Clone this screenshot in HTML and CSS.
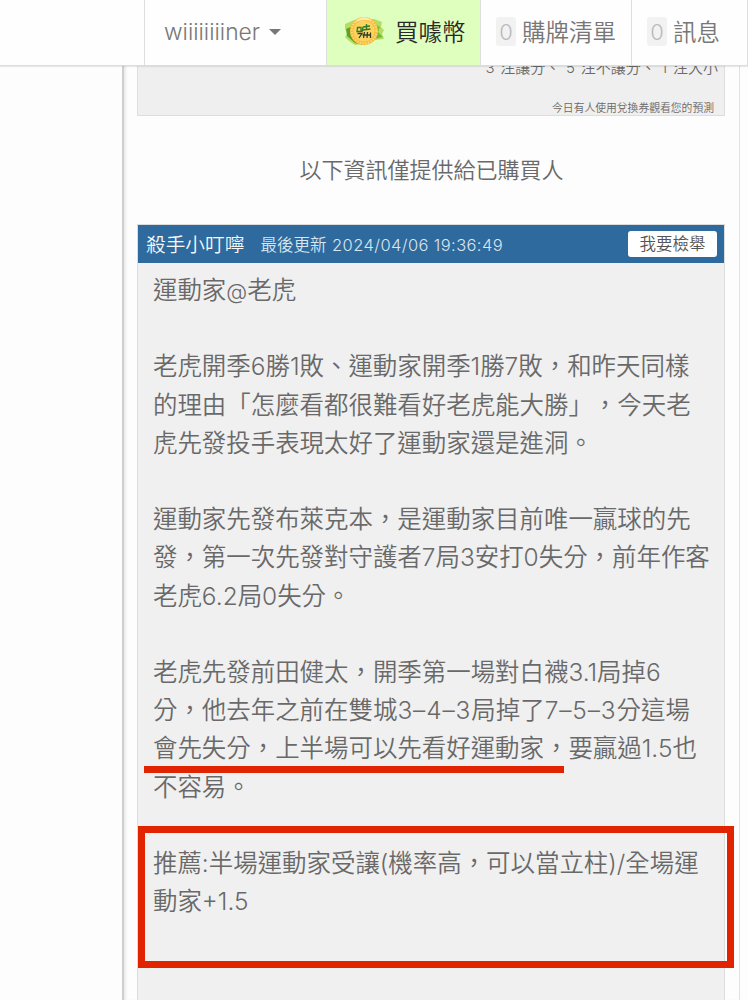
FILE: index.html
```html
<!DOCTYPE html>
<html lang="zh-Hant">
<head>
	<meta charset="UTF-8">
	<title>殺手小叮嚀</title>
	<link rel="stylesheet" href="styles.css">
</head>
<body>
	<div class="topbar">
	    <a class="user">
	        <span class="user_name">wiiiiiiiiner</span>
	        <span class="caret"></span>
	    </a>
	    <a class="coin">
	        <svg class="coin_icon" width="44" height="36" viewBox="0 0 44 36">
	            <path d="M3 11l9-4 20-1 8 3-1 5 3 3-2 4 2 5-9 1-4 3-16 2-6-4-4-4 3-4-3-4z" fill="#b4dd62"/>
	            <path d="M4 16l7-3 2 12 9 7-9-2-8-7z" fill="#5f9f2c"/>
	            <path d="M33 11l5 3-2 5 5 5-9 2z" fill="#78b936"/>
	            <circle cx="22" cy="18" r="14" fill="#f7bd3b"/>
	            <circle cx="22" cy="18" r="12.400" fill="none" stroke="#fde08a" stroke-width="2" stroke-dasharray="1.200 1.600"/>
	            <circle cx="22" cy="18" r="10.600" fill="#fbd35f"/>
	            <path d="M13 9c5-6 12-6 17-1-6-2-12-1-17 1z" fill="#ffe9a5"/>
	            <g fill="none" stroke="#2f7a2c" stroke-width="1.300">
	                <path d="M15.500 14.500h3.500v4h-4zM21 14l7-1M24.500 11v6M21 17l7.500-1M21 14l-1 5"/>
	                <path d="M15.500 20.500h4.500l-3 4.500M22.500 19l-1 6M20.500 22h8.500M25.500 19l-.5 6M28.500 19.500v5.500" stroke="#303e28"/>
	            </g>
	        </svg>
	        <span class="coin_text">買噱幣</span>
	    </a>
	    <a class="cart"><span class="num">0</span>購牌清單</a>
	    <a class="msg"><span class="num">0</span>訊息</a>
	</div>

	<div class="main">
	    <div class="record">
	        <p class="bets">3 注讓分、 5 注不讓分、 1 注大小</p>
	        <p class="ticket">今日有人使用兌換券觀看您的預測</p>
	    </div>
	    <p class="notice">以下資訊僅提供給已購買人</p>
	    <div class="card">
	        <div class="card_title">
	            <span class="name">殺手小叮嚀</span>
	            <span class="time">最後更新 <span class="date">2024/04/06 19:36:49</span></span>
	            <a class="report">我要檢舉</a>
	        </div>
	        <div class="text">
	            <p>運動家<span class="at">@</span>老虎</p>
	            <p>老虎開季6勝1敗、運動家開季1勝7敗，和昨天同樣<br>的理由「怎麼看都很難看好老虎能大勝」，今天老<br>虎先發投手表現太好了運動家還是進洞。</p>
	            <p>運動家先發布萊克本，是運動家目前唯一贏球的先<br>發，第一次先發對守護者7局3安打0失分，前年作客<br>老虎6.2局0失分。</p>
	            <p>老虎先發前田健太，開季第一場對白襪3.1局掉6<br>分，他去年之前在雙城<span class="score">3–4–3</span>局掉了<span class="score">7–5–3</span>分這場<br><span class="mark">會先失分，上半場可以先看好運動家，</span>要贏過1.5也<br>不容易。</p>
	            <p class="pick">推薦:半場運動家受讓(機率高，可以當立柱)/全場運<br>動家+1.5</p>
	        </div>
	    </div>
	</div>
</body>
</html>
```
FILE: styles.css
```css
* {
    margin: 0;
    padding: 0;
    box-sizing: border-box;
}
body {
    height: 1000px;
    overflow: hidden;
    background-color: #fdfdfd;
    color: #696969;
    font-family: Inter, "Noto Sans CJK TC", sans-serif;
    font-weight: 350;
    text-spacing-trim: space-all;
}
/* 上方選單 */
.topbar {
    position: relative;
    z-index: 2;
    display: flex;
    width: 748px;
    height: 66px;
    padding-left: 144px;
    background-color: #fefefe;
    border-bottom: 1px solid #dcdcdc;
    box-shadow: 0 1px 1px rgba(0,0,0,0.08);
    font-size: 23.5px;
    color: #777;
}
.topbar a {
    display: flex;
    align-items: center;
    height: 65px;
    padding-bottom: 4px;
    border-left: 1px solid #dedede;
    white-space: nowrap;
}
.topbar .user {
    width: 182px;
    padding-bottom: 2px;
    padding-left: 19px;
    font-size: 22.800px;
}
.caret {
    margin-left: 9px;
    border: 6px solid transparent;
    border-top-color: #777;
    border-bottom: 0;
}
.topbar .coin {
    width: 154px;
    padding-left: 15px;
    background-color: #dfffbe;
    color: #292929;
}
.coin_icon {
    margin-right: 9px;
}
.topbar .cart {
    width: 151px;
    padding-left: 15px;
}
.topbar .msg {
    width: 117px;
    padding-left: 15px;
    border-right: 1px solid #dedede;
}
.num {
    width: 20px;
    height: 29px;
    margin-top: 2px;
    margin-right: 6px;
    border-radius: 3px;
    background-color: #f2f2f2;
    color: #bbb;
    line-height: 31px;
    text-align: center;
    font-size: 22px;
}
.main {
    width: 618px;
    height: 949px;
    margin-top: -15px;
    margin-left: 122px;
    padding: 0 14px 0 13px;
    border-left: 2px solid #cfcfcf;
    border-right: 1px solid #e2e2e2;
    box-shadow: inset 3px 0 3px -1px rgba(0,0,0,0.08);
}
/* 上一張卡片，上半部被選單蓋住 */
.record {
    height: 65px;
    padding-right: 10px;
    background-color: #efefef;
    border: 1px solid #dedede;
    text-align: right;
}
.bets {
    margin-right: -4px;
    padding-top: 4px;
    font-size: 15px;
    line-height: 24px;
    word-spacing: 1.500px;
}
.ticket {
    padding-top: 19px;
    font-size: 10.800px;
    line-height: 20px;
}
.notice {
    height: 108px;
    padding-left: 1px;
    font-size: 22px;
    line-height: 109px;
    text-align: center;
}
.card {
    height: 776px;
    background-color: #f0f0f0;
    border: 1px solid #dcdcdc;
    border-bottom: 0;
}
.card_title {
    display: flex;
    align-items: center;
    height: 38px;
    padding: 0 7px 0 8px;
    background-color: #2e6a9e;
    color: #f5f8fb;
}
.name {
    margin-top: -2px;
    font-size: 19.700px;
}
.time {
    margin-top: -1px;
    margin-left: 16px;
    font-size: 16.500px;
    color: #d9e5ef;
}
.date {
    margin-left: 1px;
    letter-spacing: 0.400px;
}
.report {
    width: 89px;
    margin-left: auto;
    border-radius: 3px;
    background-color: #fff;
    color: #555;
    font-size: 16.500px;
    line-height: 26px;
    text-align: center;
}
.text {
    padding: 8px 0 0 15px;
    font-size: 24.450px;
    line-height: 38.200px;
    white-space: nowrap;
}
.text p {
    margin-bottom: 38.200px;
}
.at {
    font-size: 21.500px;
    line-height: 1;
}
.score {
    letter-spacing: 0.900px;
}
.mark {
    position: relative;
}
/* 紅線、紅框 */
.mark:after {
    content: "";
    position: absolute;
    left: -9px;
    bottom: -10px;
    width: 420px;
    height: 7px;
    background-color: #e12300;
}
.text .pick {
    position: relative;
}
.pick:before {
    content: "";
    position: absolute;
    left: -15px;
    top: -18px;
    width: 596px;
    height: 142px;
    box-sizing: border-box;
    border: 7px solid #e12300;
}
```
